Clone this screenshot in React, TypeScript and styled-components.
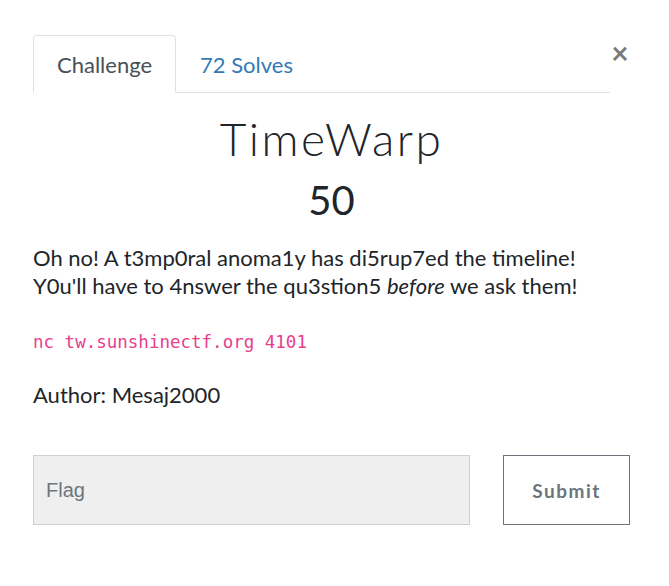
import styled, { createGlobalStyle } from 'styled-components';

const GlobalStyle = createGlobalStyle`
    html, body {
        margin: 0;
        padding: 0;
        background: #fff;
    }
    body {
        font-family: Lato, "Noto Sans", sans-serif;
        color: #212529;
    }
`;

export default function App() {
    return (
        <>
            <GlobalStyle />
            <Modal>
                <Header>
                    <Tabs>
                        <Tab $active>Challenge</Tab>
                        <Tab>72 Solves</Tab>
                    </Tabs>
                    <Close aria-label="Close">×</Close>
                </Header>
                <Title>TimeWarp</Title>
                <Points>50</Points>
                <Description>
                    Oh no! A t3mp0ral anoma1y has di5rup7ed the timeline!
                    <br />
                    Y0u'll have to 4nswer the qu3stion5 <em>before</em> we ask them!
                </Description>
                <Code>nc tw.sunshinectf.org 4101</Code>
                <Author>Author: Mesaj2000</Author>
                <SubmitRow>
                    <FlagInput placeholder="Flag" />
                    <SubmitButton>Submit</SubmitButton>
                </SubmitRow>
            </Modal>
        </>
    );
}

const Modal = styled.div`
    width: 597px;
    padding: 35px 39px 0 33px;
    display: flex;
    flex-direction: column;
`;

const Header = styled.div`
    display: flex;
    align-items: flex-start;
`;

const Tabs = styled.div`
    flex: 1;
    display: flex;
    border-bottom: 1px solid #dee2e6;
`;

const Tab = styled.div<{ $active?: boolean }>`
    padding: 0 23px;
    height: 56px;
    display: flex;
    align-items: center;
    font-size: 22px;
    margin-bottom: -1px;
    border: 1px solid ${(p) => (p.$active ? '#dee2e6' : 'transparent')};
    border-bottom-color: ${(p) => (p.$active ? '#fff' : 'transparent')};
    border-radius: 4px 4px 0 0;
    color: ${(p) => (p.$active ? '#495057' : '#337ab7')};
    background: ${(p) => (p.$active ? '#fff' : 'transparent')};
`;

const Close = styled.button`
    border: 0;
    background: none;
    padding: 0;
    margin-top: 2px;
    width: 20px;
    font-family: Lato, sans-serif;
    font-size: 30px;
    line-height: 30px;
    color: #7a7a7a;
    font-weight: 700;
    text-align: center;
`;

const Title = styled.h3`
    margin: 18px 0 0;
    text-align: center;
    font-family: Lato, sans-serif;
    font-weight: 300;
    font-size: 46px;
    line-height: 56px;
    letter-spacing: 2.5px;
    color: #212529;
`;

const Points = styled.h4`
    margin: 9px 0 0;
    text-align: center;
    font-weight: 400;
    font-size: 40px;
    line-height: 48px;
    color: #212529;
`;

const Description = styled.p`
    margin: 20px 0 0;
    font-size: 22px;
    line-height: 28px;

    em {
        font-style: italic;
    }
`;

const Code = styled.code`
    display: block;
    margin-top: 29px;
    font-family: "DejaVu Sans Mono", monospace;
    font-size: 17.5px;
    line-height: 26px;
    color: #e83e8c;
`;

const Author = styled.p`
    margin: 26px 0 0;
    font-size: 22px;
    line-height: 28px;
`;

const SubmitRow = styled.div`
    display: flex;
    gap: 33px;
    margin-top: 46px;
`;

const FlagInput = styled.input`
    width: 437px;
    height: 70px;
    box-sizing: border-box;
    padding: 0 12px;
    background: #efefef;
    border: 1px solid #d0d0d0;
    font-family: "Liberation Sans", Arial, sans-serif;
    font-size: 20px;
    color: #495057;

    &::placeholder {
        color: #6c757d;
    }
`;

const SubmitButton = styled.button`
    width: 127px;
    height: 70px;
    background: #fff;
    border: 1px solid #6c757d;
    border-radius: 0;
    font-family: Lato, sans-serif;
    font-weight: 700;
    font-size: 19px;
    letter-spacing: 1.5px;
    color: #6c757d;
`;
